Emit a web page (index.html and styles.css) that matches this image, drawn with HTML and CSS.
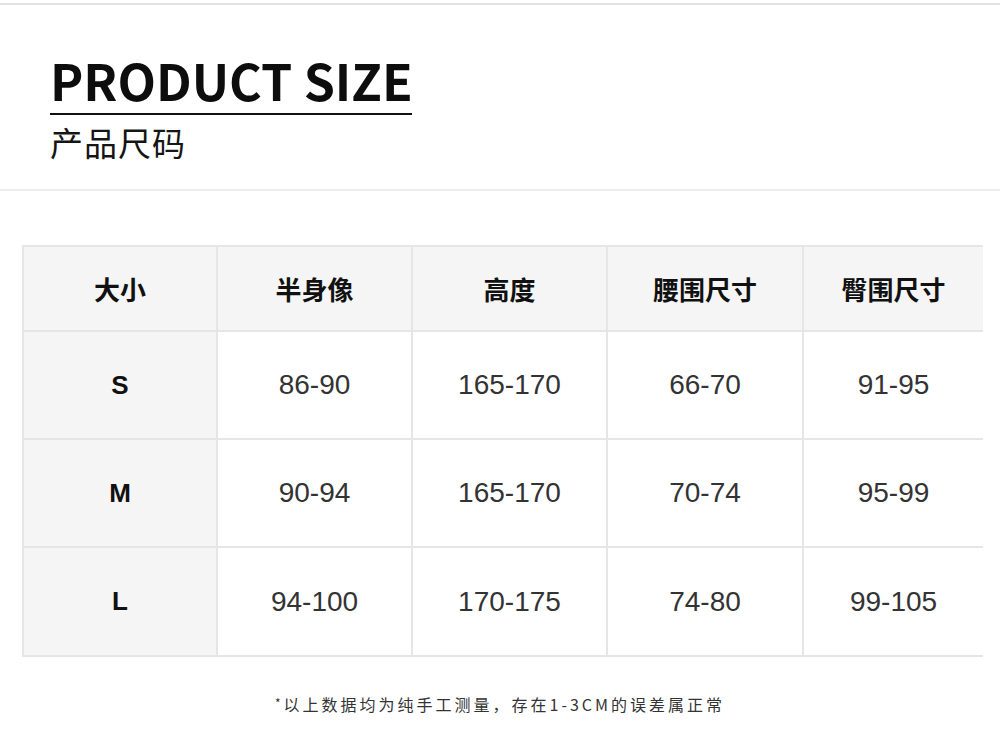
FILE: index.html
```html
<!DOCTYPE html>
<html lang="zh-CN">
<head>
<meta charset="utf-8">
<title>Product Size</title>
<link rel="stylesheet" href="styles.css">
</head>
<body>
<div class="page">
  <div class="rule-top"></div>
  <header class="head">
    <h1 class="title">PRODUCT SIZE</h1>
    <div class="title-line"></div>
    <h2 class="subtitle">产品尺码</h2>
  </header>
  <div class="rule-mid"></div>
  <section class="table-wrap">
    <div class="size-grid">
      <div class="cell hd">大小</div>
      <div class="cell hd">半身像</div>
      <div class="cell hd">高度</div>
      <div class="cell hd">腰围尺寸</div>
      <div class="cell hd">臀围尺寸</div>

      <div class="cell lbl">S</div>
      <div class="cell">86-90</div>
      <div class="cell">165-170</div>
      <div class="cell">66-70</div>
      <div class="cell">91-95</div>

      <div class="cell lbl">M</div>
      <div class="cell">90-94</div>
      <div class="cell">165-170</div>
      <div class="cell">70-74</div>
      <div class="cell">95-99</div>

      <div class="cell lbl">L</div>
      <div class="cell">94-100</div>
      <div class="cell">170-175</div>
      <div class="cell">74-80</div>
      <div class="cell">99-105</div>
    </div>
  </section>
  <p class="note"><span class="star">*</span>以上数据均为纯手工测量，存在1-3CM的误差属正常</p>
</div>
</body>
</html>
```

FILE: styles.css
```css
html, body {
  margin: 0;
  padding: 0;
  background: #ffffff;
}

.page {
  width: 1000px;
  height: 756px;
  overflow: hidden;
  font-family: "Noto Sans CJK SC", "Noto Sans", sans-serif;
  color: #111;
}

.rule-top {
  margin-top: 3px;
  height: 2px;
  background: #e2e2e2;
}

.head {
  padding-left: 50px;
  height: 184px;
  box-sizing: border-box;
  padding-top: 44px;
}

.title {
  margin: 0;
  font-family: "Noto Sans CJK SC", "Noto Sans", sans-serif;
  font-weight: 700;
  font-size: 50px;
  line-height: 60px;
  letter-spacing: 0;
  color: #0d0d0d;
}

.title-line {
  width: 362px;
  height: 2px;
  background: #111;
  margin-top: 4px;
}

.subtitle {
  margin: 0;
  margin-top: 7px;
  font-weight: 400;
  font-size: 33px;
  line-height: 40px;
  letter-spacing: 1px;
  color: #151515;
}

.rule-mid {
  height: 2px;
  background: #ececec;
}

.table-wrap {
  padding-top: 54px;
  padding-left: 22px;
}

.size-grid {
  width: 959px;
  display: grid;
  grid-template-columns: 192px 193px 193px 194px 1fr;
  grid-template-rows: 83px 106px 106px 107px;
  gap: 2px;
  padding: 2px 0 2px 2px;
  background: #e6e6e6;
}

.cell {
  background: #ffffff;
  display: flex;
  align-items: center;
  justify-content: center;
  font-family: "Liberation Sans", Arial, sans-serif;
  font-size: 28px;
  color: #333;
}

.cell.hd {
  background: #f5f5f5;
  font-family: "Noto Sans CJK SC", sans-serif;
  font-weight: 700;
  font-size: 26px;
  color: #111;
}

.cell.lbl {
  background: #f5f5f5;
  font-weight: 700;
  font-size: 26px;
  color: #111;
}

.note {
  margin: 0;
  margin-top: 34px;
  text-align: center;
  font-family: "Noto Sans CJK SC", sans-serif;
  font-size: 16px;
  line-height: 24px;
  letter-spacing: 3px;
  color: #333;
  font-weight: 400;
}

.star {
  font-size: 12px;
  vertical-align: 3px;
}
```
